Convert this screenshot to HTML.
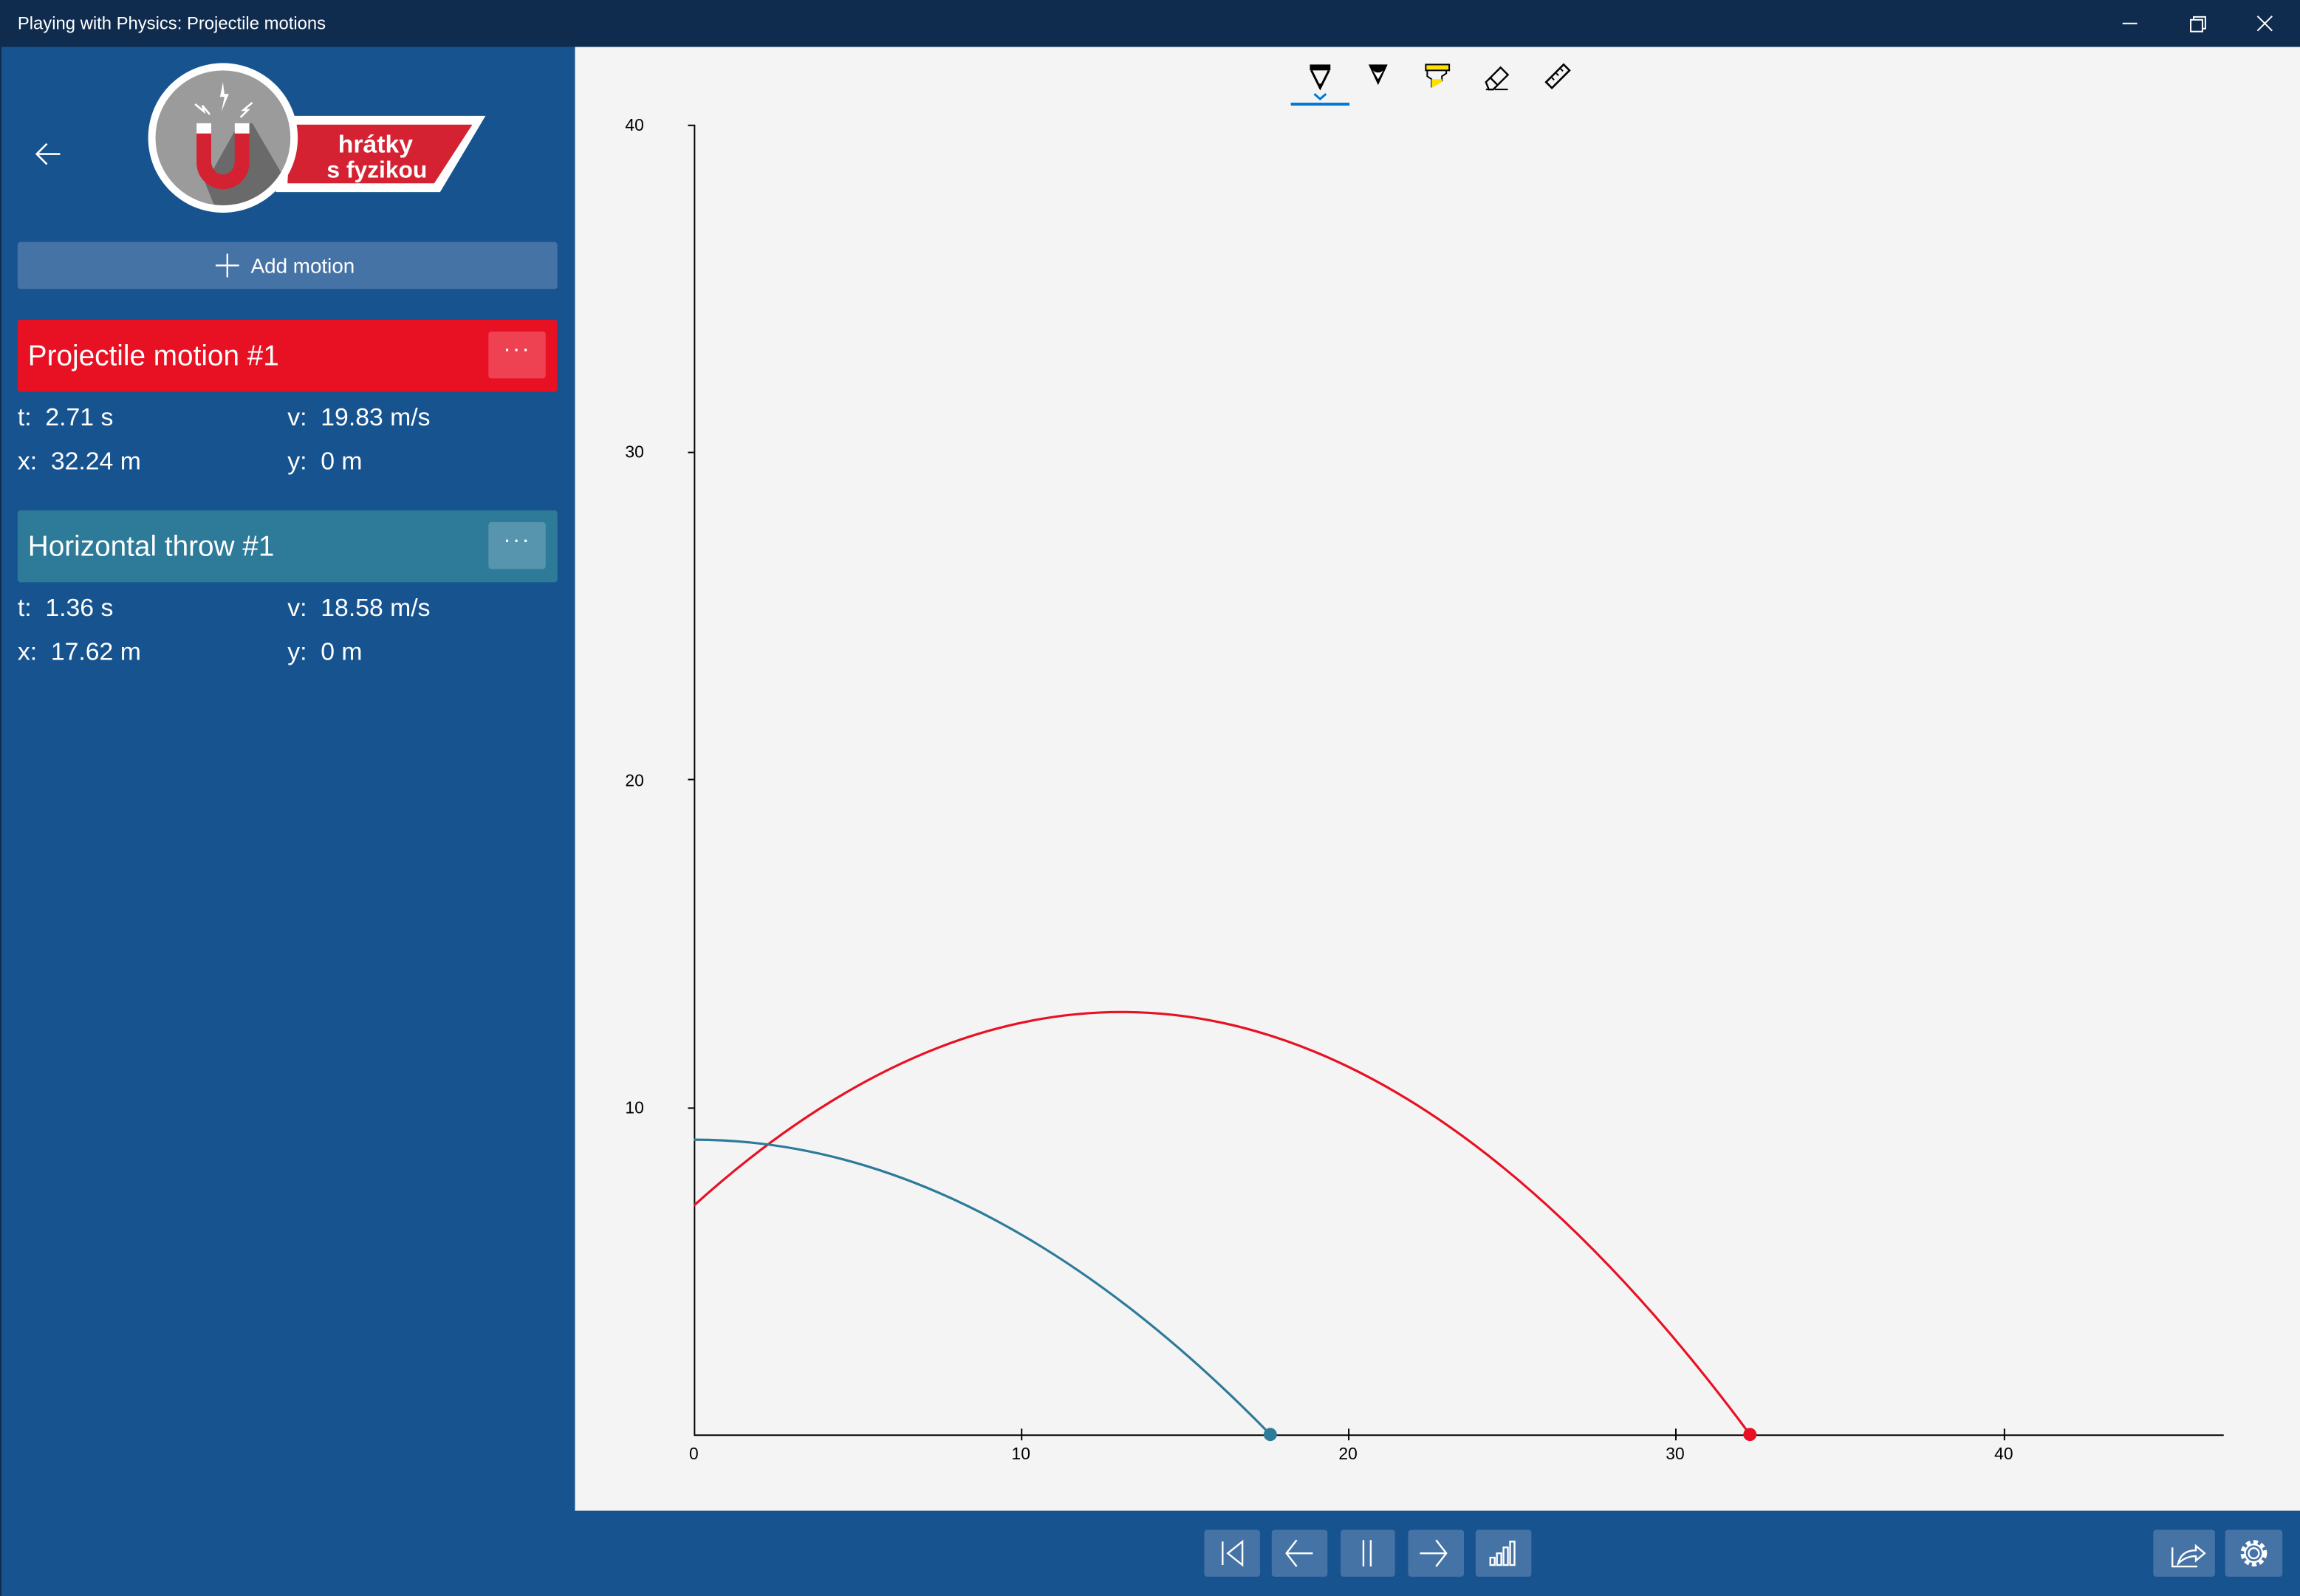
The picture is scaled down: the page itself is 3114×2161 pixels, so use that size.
<!DOCTYPE html>
<html><head><meta charset="utf-8"><style>
html,body{margin:0;padding:0;width:3114px;height:2160px;overflow:hidden;background:#17548f}
#w{position:absolute;left:0;top:0;width:1568px;height:1088px;transform:scale(1.98597);transform-origin:0 0;font-family:"Liberation Sans",sans-serif;color:#fff}
.a{position:absolute}
.btn{position:absolute;background:#4673a6;border-radius:2px}
.st{position:absolute;font-size:17px}
</style></head><body><div id="w">
<div class="a" style="left:0;top:0;width:1568px;height:32px;background:#0f2c4e"></div>
<div class="a" style="left:12px;top:9px;font-size:12px">Playing with Physics: Projectile motions</div>
<svg class="a" style="left:1430px;top:0" width="138" height="32" viewBox="1430 0 138 32" fill="none" stroke="#fff" stroke-width="1">
<path d="M1447 16h10"/><rect x="1493.5" y="13.5" width="8" height="8"/><path d="M1495.5 13.5v-2h8v8h-2"/><path d="M1539 11l10 10M1549 11l-10 10"/></svg>
<div class="a" style="left:392px;top:32px;width:1176px;height:998px;background:#f4f4f4"></div>
<div class="a" style="left:0;top:32px;width:1px;height:1056px;background:#0f2c4e"></div>
<svg class="a" style="left:22px;top:94px" width="22" height="22" viewBox="0 0 22 22" fill="none" stroke="#fff" stroke-width="1.3"><path d="M3 11h16M10 4l-7 7 7 7"/></svg>
<!-- logo -->
<svg class="a" style="left:95px;top:40px" width="240" height="110" viewBox="95 40 240 110">
<defs><clipPath id="cc"><circle cx="152" cy="94" r="46"/></clipPath></defs>
<polygon points="190,79 331,79 300,131 188,131" fill="#fff"/>
<polygon points="198,85 322,85 296,125 196,125" fill="#d42232"/>
<circle cx="152" cy="94" r="51" fill="#fff"/>
<circle cx="152" cy="94" r="46" fill="#9b9b9b"/>
<path d="M163 84 L172 84 L200 132 L200 150 L150 150 L140 125 Z" fill="#6a6a6a" clip-path="url(#cc)"/>
<path d="M134 84 h10 v26 a8 9 0 0 0 16 0 v-26 h10 v27 a18 18 0 0 1 -36 0 z" fill="#d42232"/>
<rect x="134" y="84" width="10" height="7" fill="#fff"/><rect x="160" y="84" width="10" height="7" fill="#fff"/>
<path d="M152 56 l-2 10 3 0 -2 10 5 -12 -3 0 z" fill="#fff"/>
<path d="M133 71 l6 5 -1 -4 5 6" fill="none" stroke="#fff" stroke-width="1.3"/>
<path d="M172 70 l-6 5 3 0 -5 5" fill="none" stroke="#fff" stroke-width="1.3"/>
<text x="256" y="104" font-size="17" font-weight="bold" fill="#fff" text-anchor="middle" font-family="Liberation Sans">hrátky</text>
<text x="257" y="121" font-size="16" font-weight="bold" fill="#fff" text-anchor="middle" font-family="Liberation Sans">s fyzikou</text>
</svg>
<div class="btn" style="left:12px;top:165px;width:368px;height:32px"></div>
<svg class="a" style="left:146px;top:172px" width="18" height="18" fill="none" stroke="#fff" stroke-width="1.2"><path d="M9 1v16M1 9h16"/></svg>
<div class="a" style="left:171px;top:173px;font-size:14px">Add motion</div>
<div class="a" style="left:12px;top:218px;width:368px;height:49px;background:#e81123;border-radius:2px"></div>
<div class="a" style="left:19px;top:232px;font-size:19.5px">Projectile motion #1</div>
<div class="a" style="left:333px;top:226px;width:39px;height:32px;background:#ee4152;border-radius:2px;text-align:center;font-size:16px;line-height:26px;letter-spacing:1px">···</div>
<div class="st" style="left:12px;top:275px">t:&nbsp; 2.71 s</div>
<div class="st" style="left:196px;top:275px">v:&nbsp; 19.83 m/s</div>
<div class="st" style="left:12px;top:305px">x:&nbsp; 32.24 m</div>
<div class="st" style="left:196px;top:305px">y:&nbsp; 0 m</div>
<div class="a" style="left:12px;top:348px;width:368px;height:49px;background:#2e7a99;border-radius:2px"></div>
<div class="a" style="left:19px;top:362px;font-size:19.5px">Horizontal throw #1</div>
<div class="a" style="left:333px;top:356px;width:39px;height:32px;background:#5794ad;border-radius:2px;text-align:center;font-size:16px;line-height:26px;letter-spacing:1px">···</div>
<div class="st" style="left:12px;top:405px">t:&nbsp; 1.36 s</div>
<div class="st" style="left:196px;top:405px">v:&nbsp; 18.58 m/s</div>
<div class="st" style="left:12px;top:435px">x:&nbsp; 17.62 m</div>
<div class="st" style="left:196px;top:435px">y:&nbsp; 0 m</div>
<svg class="a" style="left:870px;top:36px" width="210" height="40" viewBox="870 36 210 40">
<rect x="893" y="44" width="14" height="4" fill="#000"/><path d="M894 48 L900 60 L906 48" fill="none" stroke="#000" stroke-width="1.5"/><path d="M898 57 L900 61 L902 57Z" fill="#000"/>
<path d="M933 44 h13 l-6.5 14z" fill="#000"/><path d="M936 48 q3.5 3 7 0 l-3.5 6z" fill="#fff"/>
<rect x="972" y="44" width="16" height="4" fill="#ffe100" stroke="#000" stroke-width="1"/><path d="M973 48 v4 l3 2 v5 l7 -4 v-3 l3 -2 v-2" fill="none" stroke="#000" stroke-width="1"/><path d="M976 54 h7 v2 l-7 4z" fill="#ffe100"/>
<path d="M1013 56 l10 -10 5 5 -10 10 h-3z M1016 53 l5 5" fill="none" stroke="#000" stroke-width="1.2"/><path d="M1013 61 h3 M1019 61 h9" stroke="#000" stroke-width="1"/>
<path d="M1054 56 l12 -12 4 4 -12 12z" fill="none" stroke="#000" stroke-width="1.3"/><path d="M1058 53 l1.5 1.5 M1061 50 l1.5 1.5 M1064 47 l1.5 1.5" stroke="#000"/>
<path d="M896 64 l4 3.5 4 -3.5" fill="none" stroke="#0078d7" stroke-width="1.5"/>
<rect x="880" y="70" width="40" height="2" fill="#0078d7"/>
</svg>
<svg class="a" style="left:392px;top:32px" width="1176" height="998" viewBox="392 32 1176 998" font-family="Liberation Sans" font-size="11.5" fill="#000">
<g stroke="#000" stroke-width="1" fill="none"><path d="M473.5 85v893.5H1516"/>
<path d="M469 85.5h4M469 308.5h4M469 531.5h4M469 755.5h4"/>
<path d="M696.5 974v8M919.5 974v8M1142.5 974v8M1366.5 974v8"/></g>
<text x="439" y="89" text-anchor="end">40</text><text x="439" y="312" text-anchor="end">30</text><text x="439" y="536" text-anchor="end">20</text><text x="439" y="759" text-anchor="end">10</text>
<text x="473" y="995" text-anchor="middle">0</text><text x="696" y="995" text-anchor="middle">10</text><text x="919" y="995" text-anchor="middle">20</text><text x="1142" y="995" text-anchor="middle">30</text><text x="1366" y="995" text-anchor="middle">40</text>
<path d="M473 822 Q835 495 1193 978" fill="none" stroke="#e81123" stroke-width="1.6"/>
<path d="M473 777 Q670 777 866 978" fill="none" stroke="#2e7a99" stroke-width="1.6"/>
<circle cx="866" cy="978" r="4.5" fill="#2e7a99"/><circle cx="1193" cy="978" r="4.5" fill="#e81123"/>
</svg>
<div class="btn" style="left:821px;top:1043px;width:38px;height:32px"></div>
<div class="btn" style="left:867px;top:1043px;width:38px;height:32px"></div>
<div class="btn" style="left:914px;top:1043px;width:37px;height:32px"></div>
<div class="btn" style="left:960px;top:1043px;width:38px;height:32px"></div>
<div class="btn" style="left:1006px;top:1043px;width:38px;height:32px"></div>
<div class="btn" style="left:1468px;top:1043px;width:42px;height:32px"></div>
<div class="btn" style="left:1517px;top:1043px;width:39px;height:32px"></div>
<svg class="a" style="left:820px;top:1040px" width="740" height="40" viewBox="820 1040 740 40" fill="none" stroke="#fff" stroke-width="1.2">
<path d="M833.5 1051v16M847 1051l-10 8 10 8z"/>
<path d="M877 1059h18M884 1050l-7 9 7 9"/>
<path d="M929.5 1050v18M934.5 1050v18"/>
<path d="M968 1059h18M979 1050l7 9-7 9"/>
<path d="M1016 1062h3v5h-3zM1020.5 1059h3v8h-3zM1025 1055h3v12h-3zM1029.5 1051h3v16h-3z"/>
<path d="M1481 1055v13h17M1485 1066q2-9 12-9v-3l6 5-6 5v-3q-7 0-12 5z"/>
<circle cx="1536.5" cy="1059" r="3.5"/><circle cx="1536.5" cy="1059" r="7.5" stroke-dasharray="3 2" stroke-width="3"/><circle cx="1536.5" cy="1059" r="6"/>
</svg>
</div></body></html>
